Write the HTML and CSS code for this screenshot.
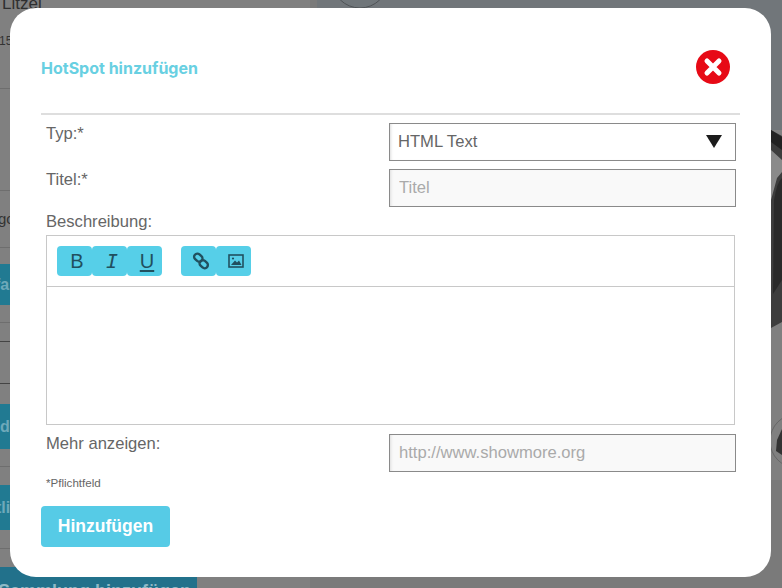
FILE: index.html
```html
<!DOCTYPE html>
<html lang="de">
<head>
<meta charset="utf-8">
<title>HotSpot hinzufügen</title>
<link rel="stylesheet" href="styles.css">
</head>
<body>
<div class="page">
  <aside class="side">
    <div class="row r1"><span class="name">Litzel</span><span class="meta">15</span></div>
    <div class="row r2"></div>
    <div class="row r3"><span class="frag">gc</span></div>
    <div class="gap g16"></div>
    <div class="teal t41"><span class="cut-fa">fa</span></div>
    <div class="row r4"></div>
    <div class="row r5"></div>
    <div class="row r6 dark"></div>
    <div class="gap g20 dark-top"></div>
    <div class="teal t45"><span>d</span></div>
    <div class="row r7"></div>
    <div class="gap g18"></div>
    <div class="teal t45"><span class="cut-tli">tli</span></div>
    <div class="row r8"></div>
    <div class="gap g26"></div>
    <div class="teal-wide">Sammlung hinzufügen</div>
  </aside>
  <main class="stage">
    <svg class="art" width="465" height="588" viewBox="0 0 465 588" aria-hidden="true">
      <rect x="0" y="0" width="465" height="130" fill="#71767a"/>
      <rect x="0" y="130" width="465" height="350" fill="#808080"/>
      <rect x="0" y="480" width="465" height="108" fill="#7a7a7a"/>
      <circle cx="43" cy="-20" r="28" fill="#70767a" stroke="#4f5356" stroke-width="1"/>
      <path d="M454 130 L465 136 L465 322 L454 328 Z" fill="#3d3d3d"/>
      <path d="M454 130 L465 137 L465 150 L454 142 Z" fill="#222"/>
      <path d="M454 150 L465 160 L465 172 L460 178 L454 200 Z" fill="#8a8a8a"/>
      <path d="M457 200 Q460 182 465 178 L465 280 Q460 288 456 294 Z" fill="#2a2a2a"/>
      <circle cx="480" cy="441" r="27" fill="#808080" stroke="#666" stroke-width="1"/>
      <path d="M460 440 L465 429 L465 455 L459 451 Z" fill="#333"/>
    </svg>
  </main>
  <section class="modal">
    <header class="modal-head">
      <h1 class="modal-title">HotSpot hinzufügen</h1>
      <svg class="close" width="34" height="34" viewBox="0 0 34 34" aria-label="Schließen">
        <circle cx="17" cy="17" r="17" fill="#e70a16"/>
        <path d="M11 11 L23 23 M23 11 L11 23" stroke="#fff" stroke-width="5" stroke-linecap="round"/>
      </svg>
    </header>
    <form class="form">
      <div class="field">
        <label class="label label-top">Typ:*</label>
        <div class="select-wrap">
          <select class="control select"><option>HTML Text</option></select>
          <span class="arrow"></span>
        </div>
      </div>
      <div class="field">
        <label class="label label-top">Titel:*</label>
        <input class="control input" type="text" placeholder="Titel">
      </div>
      <label class="label label-desc">Beschreibung:</label>
      <div class="editor">
        <div class="toolbar">
          <div class="group">
            <span class="tool tool-b">B</span>
            <span class="tool tool-i">I</span>
            <span class="tool tool-u">U</span>
          </div>
          <div class="group">
            <span class="tool">
              <svg width="18" height="18" viewBox="0 0 18 18" fill="none" stroke="#21505f" stroke-width="2.4">
                <rect x="1.8" y="2.5" width="9" height="6.4" rx="3.2" transform="rotate(42 6.3 5.7)"/>
                <rect x="7.2" y="9" width="9" height="6.4" rx="3.2" transform="rotate(42 11.7 12.2)"/>
              </svg>
            </span>
            <span class="tool">
              <svg width="16" height="14" viewBox="0 0 16 14" fill="none">
                <rect x="1" y="1" width="14" height="12" stroke="#21505f" stroke-width="1.6"/>
                <path d="M3 11 L7 6.5 L9 8.5 L11 6.5 L13.5 11 Z" fill="#21505f"/>
                <circle cx="5" cy="4.5" r="1.1" fill="#21505f"/>
              </svg>
            </span>
          </div>
        </div>
        <div class="editor-body"></div>
      </div>
      <div class="field field-more">
        <label class="label">Mehr anzeigen:</label>
        <input class="control input" type="text" placeholder="http://www.showmore.org">
      </div>
      <p class="note">*Pflichtfeld</p>
    </form>
    <button class="submit" type="button">Hinzufügen</button>
  </section>
</div>
</body>
</html>
```
FILE: styles.css
```css
* { box-sizing: border-box; }
html, body { margin: 0; height: 100%; }
body { font-family: "Liberation Sans", Arial, sans-serif; background: #7f7f7f; overflow: hidden; }

.page { position: relative; display: flex; width: 782px; height: 588px; overflow: hidden; }

/* dimmed page behind the dialog */
.side { width: 317px; height: 588px; flex: none; background: #808080; border-right: 7px solid #7a7a7a; color: #333; overflow: hidden; }
.stage { flex: 1; height: 588px; overflow: hidden; }
.art { display: block; }

.row { border-bottom: 1px solid #6e6e6e; position: relative; }
.r1 { height: 89px; padding-left: 2px; display: flow-root; }
.name { display: block; font-size: 17px; line-height: 16px; margin-top: -4px; color: #2f2f2f; }
.meta { display: block; font-size: 12px; line-height: 14px; margin-top: 22px; margin-left: -3px; color: #333; }
.r2 { height: 102px; }
.r3 { height: 57px; }
.frag { position: absolute; left: -2px; top: 19px; font-size: 15px; color: #333; }
.gap { height: 16px; }
.g16 { height: 16px; }
.g18 { height: 18px; }
.g20 { height: 20px; }
.g26 { height: 18px; }
.teal { background: #217a92; color: #6ea9ba; font-size: 16px; font-weight: bold; display: flex; align-items: center; padding-left: 0; }
.cut-fa { margin-left: -5px; }
.cut-tli { margin-left: -4px; }
.t41 { height: 41px; }
.t45 { height: 45px; }
.r4 { height: 18px; }
.r5 { height: 19px; border-bottom-color: #444; }
.r6 { height: 42px; border-bottom-color: #444; }
.r7 { height: 18px; }
.r8 { height: 19px; }
.teal-wide { width: 197px; height: 40px; background: #22718b; color: #8fb9c6; font-size: 18px; font-weight: bold; white-space: nowrap; padding-top: 14px; text-indent: -2px; line-height: 20px; }

/* dialog */
.modal { position: absolute; left: 10px; top: 8px; width: 761px; height: 569px; background: #fff; border-radius: 26px; padding: 0 31px; color: #666; }
.modal-head { display: flex; align-items: center; justify-content: space-between; height: 107px; padding: 43px 10px 30px 0; border-bottom: 2px solid #dedede; }
.modal-title { margin: 0; padding-top: 2px; font-size: 16px; font-weight: bold; font-family: Inter, "Liberation Sans", sans-serif; color: #68d0e2; }
.close { display: block; }

.form { padding: 8px 4px 0 5px; }
.field { display: grid; grid-template-columns: 343px 347px; margin-bottom: 8px; }
.label { display: block; font-size: 16.6px; line-height: 20px; color: #666; }
.label-top { padding-top: 1px; }
.label-desc { margin-top: -4px; height: 24px; padding-top: 1px; }
.control { width: 347px; height: 38px; border: 1px solid #8a8a8a; font-family: inherit; font-size: 16.6px; color: #666; margin: 0; outline: 0; border-radius: 0; }
.select-wrap { position: relative; width: 347px; height: 38px; }
.select { appearance: none; -webkit-appearance: none; background: #fff; padding: 0 8px 2px 8px; display: block; box-shadow: inset 3px 0 3px -2px #ddd; }
.arrow { position: absolute; left: 317px; top: 12px; width: 0; height: 0; border-left: 8px solid transparent; border-right: 8px solid transparent; border-top: 13px solid #1c1c1c; }
.input { display: block; background: #f9f9f9; padding: 0 9px; box-shadow: inset 3px 0 3px -2px #ddd; }
.input::placeholder { color: #aaa; opacity: 1; }

.editor { width: 689px; height: 190px; border: 1px solid #c8c8c8; }
.toolbar { display: flex; gap: 19px; height: 51px; padding: 10px 10px; border-bottom: 1px solid #c8c8c8; }
.group { display: flex; }
.tool { display: flex; align-items: center; justify-content: center; width: 35px; height: 30px; padding-left: 5px; background: #56cfe8; border-radius: 4px; color: #21505f; font-size: 20px; line-height: 1; }
.tool-b { font-family: "Liberation Sans", sans-serif; }
.tool-i { font-family: "DejaVu Sans Mono", monospace; font-style: italic; font-size: 20px; }
.tool-u { text-decoration: underline; text-underline-offset: 2px; }
.editor-body { height: 137px; }

.field-more { margin: 9px 0 0; }
.note { margin: 3px 0 0; font-size: 11.6px; line-height: 16px; color: #666; }

.submit { display: block; width: 129px; height: 41px; margin-top: 15px; border: 0; border-radius: 4px; background: #56cbe6; color: #fff; font-family: inherit; font-size: 17.5px; font-weight: bold; padding: 0; }
```
